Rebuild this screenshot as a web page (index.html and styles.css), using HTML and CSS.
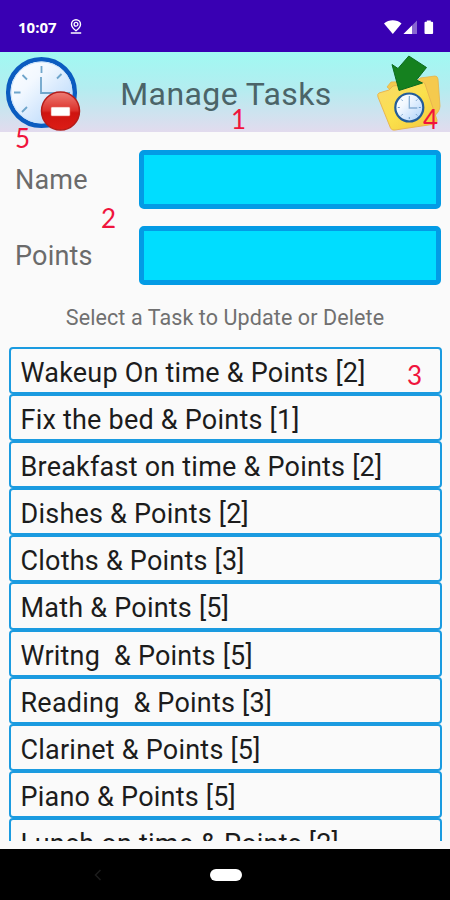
FILE: index.html
```html
<!DOCTYPE html>
<html lang="en">
<head>
  <meta charset="UTF-8">
  <title>Manage Tasks</title>
  <link rel="stylesheet" href="styles.css">
</head>
<body>
  <div class="phone">
    <div class="status-bar">
      <span class="time">10:07</span>
      <svg class="location" width="12" height="16" viewBox="0 0 12 16" fill="none" stroke="#fff">
        <path d="M6 11.8C3 9.6 1.500 7.400 1.500 5.300a4.500 4.500 0 0 1 9 0C10.500 7.400 9 9.600 6 11.800z" stroke-width="1.400"/>
        <circle cx="6" cy="5.300" r="1.900" stroke-width="1.300"/>
        <path d="M.8 14h10.400" stroke-width="1.500"/>
      </svg>
      <svg class="signals" width="50" height="15" viewBox="0 0 50 15" fill="#fff">
        <path d="M0 3.500C5-.9 12.500-.9 17.500 3.500L8.800 14z"/>
        <path d="M19.500 14L33 .5V14z" opacity=".4"/>
        <path d="M19.500 14L28 5.500V14z"/>
        <path d="M40.500 2.800a1 1 0 0 1 1-1h1.300V.5h4v1.300h1.300a1 1 0 0 1 1 1V13a1 1 0 0 1-1 1h-6.600a1 1 0 0 1-1-1z"/>
      </svg>
    </div>

    <div class="header">
      <svg class="delete-icon" width="78" height="78" viewBox="0 0 78 78">
        <defs>
          <linearGradient id="face" x1="0" y1="0" x2="1" y2="1">
            <stop offset="0" stop-color="#fff"/>
            <stop offset=".35" stop-color="#f2f8ff"/>
            <stop offset="1" stop-color="#a9d0fa"/>
          </linearGradient>
          <linearGradient id="red" x1="0" y1="0" x2="0" y2="1">
            <stop offset="0" stop-color="#ee7d75"/>
            <stop offset=".48" stop-color="#dc322c"/>
            <stop offset=".55" stop-color="#cf1410"/>
            <stop offset="1" stop-color="#dc1c16"/>
          </linearGradient>
        </defs>
        <circle cx="36.500" cy="36.500" r="33.300" fill="url(#face)" stroke="#0b5cc0" stroke-width="4.500"/>
        <circle cx="36.500" cy="36.500" r="30.500" fill="none" stroke="#c9e2fa" stroke-width="1"/>
        <g stroke="#6fa5cb" stroke-width="1.800" fill="none">
          <path d="M36.500 10v7M9 36.500h6.500M17.500 19l4.500 4.500M56.500 18l-4.500 4.500M17 56l5-5"/>
          <path d="M36 21v16H65"/>
        </g>
        <circle cx="55.500" cy="55" r="19" fill="url(#red)" stroke="#b51c19" stroke-width="1.500"/>
        <rect x="46" y="51" width="19" height="9" rx="1" fill="#fff" stroke="#e8665f" stroke-width=".6"/>
      </svg>
      <h1>Manage Tasks</h1>
      <svg class="update-icon" width="66" height="78" viewBox="0 0 66 78">
        <defs>
          <linearGradient id="folder" x1="0" y1="0" x2="1" y2="1">
            <stop offset="0" stop-color="#f9d96c"/>
            <stop offset=".5" stop-color="#fbe14c"/>
            <stop offset="1" stop-color="#f2c63e"/>
          </linearGradient>
        </defs>
        <path d="M12 32l4-5 26-1 3-3 15-2q2.500 0 3 3l2 27q0 3-2 6l-9 11z" fill="#f5ca4e" stroke="#e6b44a" stroke-width=".8"/>
        <path d="M4 38l10-3 4-4 29-4q2 0 3 2l12 36q.5 3-2 4L20 75q-3 .8-4.500-2L3 42q-1-3 1-4z" fill="url(#folder)" stroke="#e9b650" stroke-width="1"/>
        <path d="M33.800 1L51.500 12.500 41.500 25l6 3L24 35.500 17 9.500l6 4z" fill="#15811f" stroke="#0c6a20" stroke-width="1"/>
        <circle cx="34.300" cy="52.500" r="14" fill="url(#face)" stroke="#235c99" stroke-width="2.200"/>
        <path d="M34.300 43v10h8" fill="none" stroke="#86add3" stroke-width="1.300"/>
        <path d="M34.300 41v2M34.300 62v2M22.800 52.500h2M43.800 52.500h2M26.300 44.500l1.300 1.300M42.300 44.500l-1.300 1.300M26.300 60.500l1.300-1.300M42.300 60.500l-1.300-1.300" stroke="#6b9ac8" stroke-width="1"/>
      </svg>
    </div>

    <div class="formulario">
      <label for="name">Name</label>
      <input id="name">
      <label for="points">Points</label>
      <input id="points">
    </div>

    <p class="hint">Select a Task to Update or Delete</p>

    <ul class="tasks">
      <li>Wakeup On time &amp; Points [2]</li>
      <li>Fix the bed &amp; Points [1]</li>
      <li>Breakfast on time &amp; Points [2]</li>
      <li>Dishes &amp; Points [2]</li>
      <li>Cloths &amp; Points [3]</li>
      <li>Math &amp; Points [5]</li>
      <li>Writng  &amp; Points [5]</li>
      <li>Reading  &amp; Points [3]</li>
      <li>Clarinet &amp; Points [5]</li>
      <li>Piano &amp; Points [5]</li>
      <li>Lunch on time &amp; Points [2]</li>
    </ul>

    <div class="nav-bar">
      <svg class="back" width="8" height="12" viewBox="0 0 8 12" fill="none" stroke="#1c1c1c" stroke-width="1.500">
        <path d="M6.500 1L1.500 6l5 5"/>
      </svg>
      <span class="home"></span>
    </div>

    <!-- numbered callouts -->
    <span class="callout c1">1</span>
    <span class="callout c2">2</span>
    <span class="callout c3">3</span>
    <span class="callout c4">4</span>
    <span class="callout c5">5</span>
  </div>
</body>
</html>
```

FILE: styles.css
```css
* {
  box-sizing: border-box;
}

body {
  margin: 0;
  font-family: Roboto, sans-serif;
  background: #fafafa;
}

.phone {
  position: relative;
  display: flex;
  flex-direction: column;
  width: 450px;
  height: 900px;
  overflow: hidden;
}

.status-bar {
  display: flex;
  align-items: center;
  height: 52px;
  padding: 2px 16px 0 18px;
  background: #3900b3;
  color: white;
}

.time {
  width: 52px;
  font-family: "Open Sans", sans-serif;
  font-size: 15px;
  font-weight: 700;
}

.signals {
  margin-left: auto;
}

.header {
  display: flex;
  justify-content: space-between;
  height: 80px;
  padding: 4px 9px 0 5px;
  background: linear-gradient(#a0f9f2, #b3edf0 45%, #e2dbee);
}

.update-icon {
  margin-top: -1px;
}

h1 {
  margin: 0;
  padding-right: 6px;
  font-size: 32px;
  font-weight: 400;
  line-height: 77px;
  letter-spacing: 0.4px;
  color: #4b6468;
}

.formulario {
  display: grid;
  grid-template-columns: 124px 302px;
  row-gap: 17px;
  align-items: center;
  padding: 18px 0 0 15px;
}

label {
  font-size: 27px;
  letter-spacing: 0.2px;
  color: #6b6b6b;
}

input {
  width: 100%;
  height: 59px;
  border: 5px solid #039be5;
  border-radius: 5px;
  background: #00ddff;
}

.hint {
  margin: 0;
  padding-top: 18px;
  font-size: 21.5px;
  line-height: 30px;
  letter-spacing: 0.1px;
  text-align: center;
  color: #707070;
}

.tasks {
  height: 494px;
  margin: 14px 8.5px 0 9px;
  padding: 0;
  overflow: hidden;
  list-style: none;
}

.tasks li {
  height: 47.1px;
  padding-left: 9.5px;
  border: 2px solid #1b9be0;
  border-radius: 4px;
  font-size: 27px;
  line-height: 49px;
  letter-spacing: 0.22px;
  white-space: pre;
  color: #1c1c1c;
}

.nav-bar {
  display: flex;
  align-items: center;
  height: 51px;
  margin-top: auto;
  padding-left: 94px;
  background: black;
}

.home {
  width: 32px;
  height: 12px;
  margin-left: 108px;
  border-radius: 6px;
  background: white;
}

.callout {
  position: absolute;
  font-family: Lato, sans-serif;
  font-size: 26px;
  line-height: 30px;
  color: #f0143c;
}

.c1 {
  left: 231px;
  top: 104px;
}

.c2 {
  left: 101px;
  top: 203px;
}

.c3 {
  left: 407px;
  top: 360px;
}

.c4 {
  left: 423px;
  top: 104px;
}

.c5 {
  left: 15px;
  top: 123px;
}
```
